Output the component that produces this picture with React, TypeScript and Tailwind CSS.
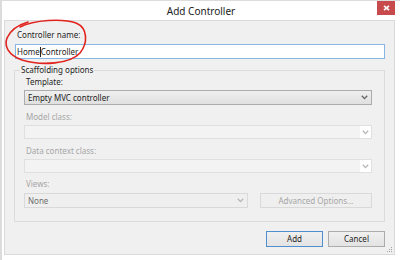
import React from "react";

const Chevron = ({ color = "#606060" }: { color?: string }) => (
  <svg width="7" height="5" viewBox="0 0 7 5">
    <path d="M0.8 0.8 L3.5 3.6 L6.2 0.8" fill="none" stroke={color} strokeWidth="1.3" />
  </svg>
);

export default function App() {
  return (
    <div
      className="relative w-[400px] h-[260px] bg-white border-t border-l-2 border-[#dcdcdc] overflow-hidden text-[#1e1e1e]"
      style={{ fontFamily: '"Segoe UI", "Noto Sans", sans-serif' }}
    >
      {/* Title bar */}
      <div className="relative h-[19px] flex items-center justify-center">
        <span className="text-[10px] leading-none text-[#222]">Add Controller</span>
        <div className="absolute right-[5px] top-[-1px] w-[18px] h-[15px] bg-[#c74a4d] flex items-center justify-center">
          <svg width="7" height="6" viewBox="0 0 7 6">
            <path d="M1 0.8 L6 5.2 M6 0.8 L1 5.2" stroke="white" strokeWidth="1.6" />
          </svg>
        </div>
      </div>

      {/* Client area */}
      <div className="relative ml-[2px] mr-[5px] h-[235px] border border-[#dadada] bg-[#f0f0f0] pl-[10px] pr-[9px] pt-[8px] flex flex-col">
        <div className="pl-[2px] h-[11px] text-[8px] leading-[11px]">Controller name:</div>
        <div className="mt-[4px] h-[15px] border border-[#86b5e6] bg-white flex items-center pl-[1px] text-[8px] leading-none">
          <span>Home</span>
          <span className="inline-block w-px h-[10px] bg-[#222]" />
          <span>Controller</span>
        </div>

        <fieldset className="mt-[6px] ml-[-1px] border border-[#dcdcdc] pl-[9px] pr-[12px] pb-[13px] flex flex-col">
          <legend className="ml-[-4px] px-[1px] text-[8px] leading-[10px]">Scaffolding options</legend>
          <div className="mt-[2px] pl-[2px] h-[10px] text-[8px] leading-[10px]">Template:</div>
          <div className="mt-[3px] h-[15px] border border-[#acacac] bg-gradient-to-b from-[#efefef] to-[#e0e0e0] flex items-center justify-between pl-[3px] pr-[3px] text-[8px] leading-none">
            <span>Empty MVC controller</span>
            <Chevron />
          </div>

          <div className="mt-[7px] pl-[2px] h-[10px] text-[8px] leading-[10px] text-[#a6a6a6]">Model class:</div>
          <div className="mt-[3px] h-[14px] border border-[#e0e0e0] bg-[#f3f3f3] flex justify-end">
            <div className="w-[11px] bg-white flex items-center justify-center">
              <Chevron color="#b5b5b5" />
            </div>
          </div>

          <div className="mt-[7px] pl-[2px] h-[10px] text-[8px] leading-[10px] text-[#a6a6a6]">Data context class:</div>
          <div className="mt-[3px] h-[14px] border border-[#e0e0e0] bg-[#f3f3f3] flex justify-end">
            <div className="w-[11px] bg-white flex items-center justify-center">
              <Chevron color="#b5b5b5" />
            </div>
          </div>

          <div className="mt-[6px] pl-[2px] h-[10px] text-[8px] leading-[10px] text-[#a6a6a6]">Views:</div>
          <div className="mt-[4px] flex gap-[12px]">
            <div className="w-[224px] h-[15px] border border-[#d9d9d9] bg-[#efefef] flex items-center justify-between pl-[3px] pr-[3px] text-[8px] leading-none text-[#6d6d6d]">
              <span>None</span>
              <Chevron color="#b5b5b5" />
            </div>
            <div className="flex-1 h-[15px] border border-[#d9d9d9] bg-[#efefef] flex items-center justify-center text-[8px] leading-none text-[#a6a6a6]">
              Advanced Options...
            </div>
          </div>
        </fieldset>

        <div className="mt-[9px] flex justify-end gap-[5px]">
          <div className="w-[57px] h-[16px] border border-[#4f8fd0] bg-gradient-to-b from-[#f0f0f0] to-[#e3e3e3] flex items-center justify-center text-[8px] leading-none">
            Add
          </div>
          <div className="w-[57px] h-[16px] border border-[#acacac] bg-gradient-to-b from-[#f0f0f0] to-[#e3e3e3] flex items-center justify-center text-[8px] leading-none">
            Cancel
          </div>
        </div>

        {/* resize grip */}
        <svg className="absolute right-[1px] bottom-[1px]" width="6" height="6" viewBox="0 0 6 6">
          <rect x="4" y="0" width="1" height="1" fill="#a0a0a0" />
          <rect x="2" y="2" width="1" height="1" fill="#a0a0a0" />
          <rect x="4" y="2" width="1" height="1" fill="#a0a0a0" />
          <rect x="0" y="4" width="1" height="1" fill="#a0a0a0" />
          <rect x="2" y="4" width="1" height="1" fill="#a0a0a0" />
          <rect x="4" y="4" width="1" height="1" fill="#a0a0a0" />
        </svg>
      </div>

      {/* red hand-drawn circle */}
      <svg className="absolute left-0 top-0 pointer-events-none" width="100" height="70" viewBox="0 0 100 70">
        <path
          d="M18 26 C 32 19, 60 17, 74 22 C 86 27, 86 42, 78 52 C 68 63, 40 65, 20 59 C 6 54, 2 45, 5 37 C 8 30, 16 24, 26 21"
          fill="none"
          stroke="#e0231d"
          strokeWidth="1.6"
          strokeLinecap="round"
        />
      </svg>
    </div>
  );
}
